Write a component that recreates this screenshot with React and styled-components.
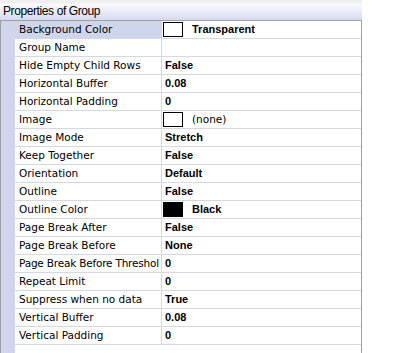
import React from "react";
import styled, { createGlobalStyle } from "styled-components";

const Global = createGlobalStyle`
  html, body { margin: 0; padding: 0; background: #ffffff; }
  body { font-family: "DejaVu Sans", Verdana, sans-serif; }
`;

const Panel = styled.div`
  width: 362px;
  height: 353px;
  display: flex;
  flex-direction: column;
`;

const Header = styled.div`
  height: 20px;
  box-sizing: border-box;
  padding: 4px 0 0 3px;
  font-family: "Liberation Sans", Arial, sans-serif;
  font-size: 12px;
  letter-spacing: -0.4px;
  line-height: 15px;
  color: #000;
  background: linear-gradient(
    to bottom,
    #f0f0f0 0px,
    #f0f0f0 3px,
    #fbfbfd 4px,
    #eceef8 10px,
    #d6daf0 20px
  );
  white-space: nowrap;
`;

const Grid = styled.div`
  flex: 1;
  display: flex;
  border: 1px solid #a0a0a0;
  border-bottom: none;
  min-height: 0;
`;

const Margin = styled.div`
  width: 14px;
  flex: none;
  background: #cfd5ea;
`;

const Rows = styled.div`
  flex: 1;
  display: flex;
  flex-direction: column;
`;

const Row = styled.div`
  display: grid;
  grid-template-columns: 147px 1fr;
  height: 18px;
  box-sizing: border-box;
  border-bottom: 1px solid #d3d7e6;
  font-size: 10.5px;
  line-height: 17px;
  color: #000;
`;

const Name = styled.div`
  padding-left: 4px;
  border-right: 1px solid #d3d7e6;
  background: ${(p) => (p.$selected ? "#cfd5ea" : "#ffffff")};
  letter-spacing: ${(p) => (p.$tight ? "-0.2px" : "0")};
  white-space: nowrap;
  overflow: hidden;
`;

const Value = styled.div`
  display: flex;
  align-items: center;
  gap: 9px;
  padding-left: ${(p) => (p.$swatch ? "1px" : "3px")};
  white-space: nowrap;
  overflow: hidden;
`;

const ValueText = styled.span`
  font-family: ${(p) =>
    p.$plain ? `"DejaVu Sans", Verdana, sans-serif` : `"Liberation Sans", Arial, sans-serif`};
  font-size: ${(p) => (p.$plain ? "10.5px" : "11px")};
  font-weight: ${(p) => (p.$plain ? "normal" : "bold")};
`;

const Swatch = styled.span`
  width: 20px;
  height: 15px;
  box-sizing: border-box;
  border: 1px solid #000;
  background: ${(p) => p.$color};
  flex: none;
`;

const props = [
  { name: "Background Color", value: "Transparent", swatch: "#ffffff", selected: true },
  { name: "Group Name", value: "" },
  { name: "Hide Empty Child Rows", value: "False" },
  { name: "Horizontal Buffer", value: "0.08" },
  { name: "Horizontal Padding", value: "0" },
  { name: "Image", value: "(none)", swatch: "#ffffff", plain: true },
  { name: "Image Mode", value: "Stretch" },
  { name: "Keep Together", value: "False" },
  { name: "Orientation", value: "Default" },
  { name: "Outline", value: "False" },
  { name: "Outline Color", value: "Black", swatch: "#000000" },
  { name: "Page Break After", value: "False" },
  { name: "Page Break Before", value: "None" },
  { name: "Page Break Before Threshol", value: "0", tight: true },
  { name: "Repeat Limit", value: "0" },
  { name: "Suppress when no data", value: "True" },
  { name: "Vertical Buffer", value: "0.08" },
  { name: "Vertical Padding", value: "0" },
];

export default function App() {
  return (
    <>
      <Global />
      <Panel>
        <Header>Properties of Group</Header>
        <Grid>
          <Margin />
          <Rows>
            {props.map((p) => (
              <Row key={p.name}>
                <Name $selected={p.selected} $tight={p.tight}>
                  {p.name}
                </Name>
                <Value $swatch={!!p.swatch}>
                  {p.swatch && <Swatch $color={p.swatch} />}
                  <ValueText $plain={p.plain}>{p.value}</ValueText>
                </Value>
              </Row>
            ))}
          </Rows>
        </Grid>
      </Panel>
    </>
  );
}
